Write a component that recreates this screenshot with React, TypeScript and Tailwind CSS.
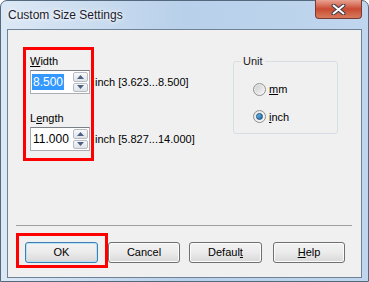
import React from 'react'

const font = { fontFamily: '"Liberation Sans", Arial, sans-serif' }

function Spin() {
  return (
    <div className="flex w-[15px] flex-col gap-[1px] py-[1px]">
      {[0, 1].map((i) => (
        <div
          key={i}
          className="flex h-[10px] items-center justify-center rounded-[2px] border border-[#b7bcc4] bg-gradient-to-b from-[#f7f8fa] to-[#dfe3e8]"
        >
          <svg width="7" height="4" viewBox="0 0 7 4">
            {i === 0 ? (
              <path d="M0 4 L3.5 0 L7 4 Z" fill="#4d6185" />
            ) : (
              <path d="M0 0 L3.5 4 L7 0 Z" fill="#4d6185" />
            )}
          </svg>
        </div>
      ))}
    </div>
  )
}

function Field(props: { value: string; selected?: boolean }) {
  return (
    <div className="flex h-[24px] w-[60px] items-stretch border border-[#abadb3] border-t-[#7a7f88] bg-white pr-[1px]">
      <div className="flex flex-1 items-center pl-[1px] text-[12px]">
        <span
          className={
            props.selected
              ? 'bg-[#3399ff] px-[1px] leading-[16px] text-white'
              : 'px-[1px] leading-[16px] text-black'
          }
        >
          {props.value}
        </span>
      </div>
      <Spin />
    </div>
  )
}

function Radio(props: { checked?: boolean; label: React.ReactNode }) {
  return (
    <div className="flex items-center gap-[3px]">
      <div className="flex h-[13px] w-[13px] items-center justify-center rounded-full border border-[#8e8f8f] bg-gradient-to-br from-[#e6e6e6] to-[#f8f8f8]">
        {props.checked ? (
          <div className="h-[7px] w-[7px] rounded-full border border-[#1b4e7a] bg-gradient-to-br from-[#6fc0f0] to-[#1665a8]" />
        ) : (
          <div className="h-[9px] w-[9px] rounded-full bg-gradient-to-br from-[#cfcfcf] to-[#f4f4f4]" />
        )}
      </div>
      <span>{props.label}</span>
    </div>
  )
}

function Btn(props: { children: React.ReactNode; def?: boolean; className?: string }) {
  return (
    <div
      className={
        'flex h-[21px] items-center justify-center rounded-[3px] border bg-gradient-to-b from-[#f3f3f3] via-[#ebebeb] to-[#d9d9d9] ' +
        (props.def ? 'border-[#3c7fb1] shadow-[inset_0_0_0_1px_#b6e2f7] ' : 'border-[#707070] shadow-[inset_0_0_0_1px_#fbfbfb] ') +
        (props.className || '')
      }
    >
      {props.children}
    </div>
  )
}

export default function App() {
  return (
    <div className="relative h-[282px] w-[369px] text-[11px] text-black" style={font}>
      <div className="flex h-full w-full flex-col rounded-t-[7px] border border-[#54687e] bg-gradient-to-r from-[#dce8f5] via-[#b8d0ea] to-[#c0d6ee] px-[6px]">
        {/* title bar */}
        <div className="flex h-[28px] items-start">
          <div className="mt-[7px] pl-[1px] text-[12px] leading-[14px] text-[#1b1b2b] [text-shadow:0_0_6px_#ffffff,0_0_3px_#ffffff]">
            Custom Size Settings
          </div>
          <div className="-mt-[1px] ml-auto mr-[0px] flex h-[19px] w-[47px] items-center justify-center rounded-b-[4px] border border-[#7a3a33] border-t-0 bg-gradient-to-b from-[#e8a293] via-[#c94a32] to-[#d77a5c]">
            <svg width="15" height="11" viewBox="0 0 15 11">
              <path d="M2.5 1.5 L12.5 9.5 M12.5 1.5 L2.5 9.5" stroke="#3d3d4a" strokeWidth="4" strokeLinecap="round" />
              <path d="M2.5 1.5 L12.5 9.5 M12.5 1.5 L2.5 9.5" stroke="#ffffff" strokeWidth="2" strokeLinecap="round" />
            </svg>
          </div>
        </div>
        {/* client area */}
        <div className="flex h-[249px] flex-col border border-[#6f8398] bg-[#f0f0f0]">
          <div className="flex h-[195px] pl-[22px]">
            <div className="w-[179px] pt-[25px]">
              <div className="leading-[13px]">
                <span className="underline underline-offset-[1px]">W</span>idth
              </div>
              <div className="mt-[2px] flex items-center">
                <Field value="8.500" selected />
                <span className="ml-[5px]">inch [3.623...8.500]</span>
              </div>
              <div className="mt-[18px] leading-[13px]">
                L<span className="underline underline-offset-[1px]">e</span>ngth
              </div>
              <div className="mt-[2px] flex items-center">
                <Field value="11.000" />
                <span className="ml-[5px]">inch [5.827...14.000]</span>
              </div>
            </div>
            <div className="relative ml-[24px] mt-[31px] h-[73px] w-[105px] rounded-[3px] border border-[#d5dfe5]">
              <span className="absolute -top-[7px] left-[7px] bg-[#f0f0f0] px-[2px] leading-[13px] text-[#1a1a1a]">
                Unit
              </span>
              <div className="flex flex-col gap-[11px] pl-[19px] pt-[19px]">
                <Radio label={<><span className="underline underline-offset-[1px]">m</span>m</>} />
                <Radio checked label={<><span className="underline underline-offset-[1px]">i</span>nch</>} />
              </div>
            </div>
          </div>
          <div className="ml-[8px] mr-[9px] h-[1px] bg-[#a0a0a0]" />
          <div className="mt-[16px] flex pl-[17px]">
            <Btn def className="w-[73px]">OK</Btn>
            <Btn className="ml-[10px] w-[72px]">Cancel</Btn>
            <Btn className="ml-[9px] w-[73px]">
              <span>
                Defaul<span className="underline underline-offset-[1px]">t</span>
              </span>
            </Btn>
            <Btn className="ml-[11px] w-[72px]">
              <span>
                <span className="underline underline-offset-[1px]">H</span>elp
              </span>
            </Btn>
          </div>
        </div>
      </div>
      {/* red annotation boxes */}
      <div className="pointer-events-none absolute left-[23px] top-[47px] h-[114px] w-[71px] border-[3px] border-[#ff0000]" />
      <div className="pointer-events-none absolute left-[16px] top-[233px] h-[35px] w-[92px] border-[3px] border-[#ff0000]" />
    </div>
  )
}
